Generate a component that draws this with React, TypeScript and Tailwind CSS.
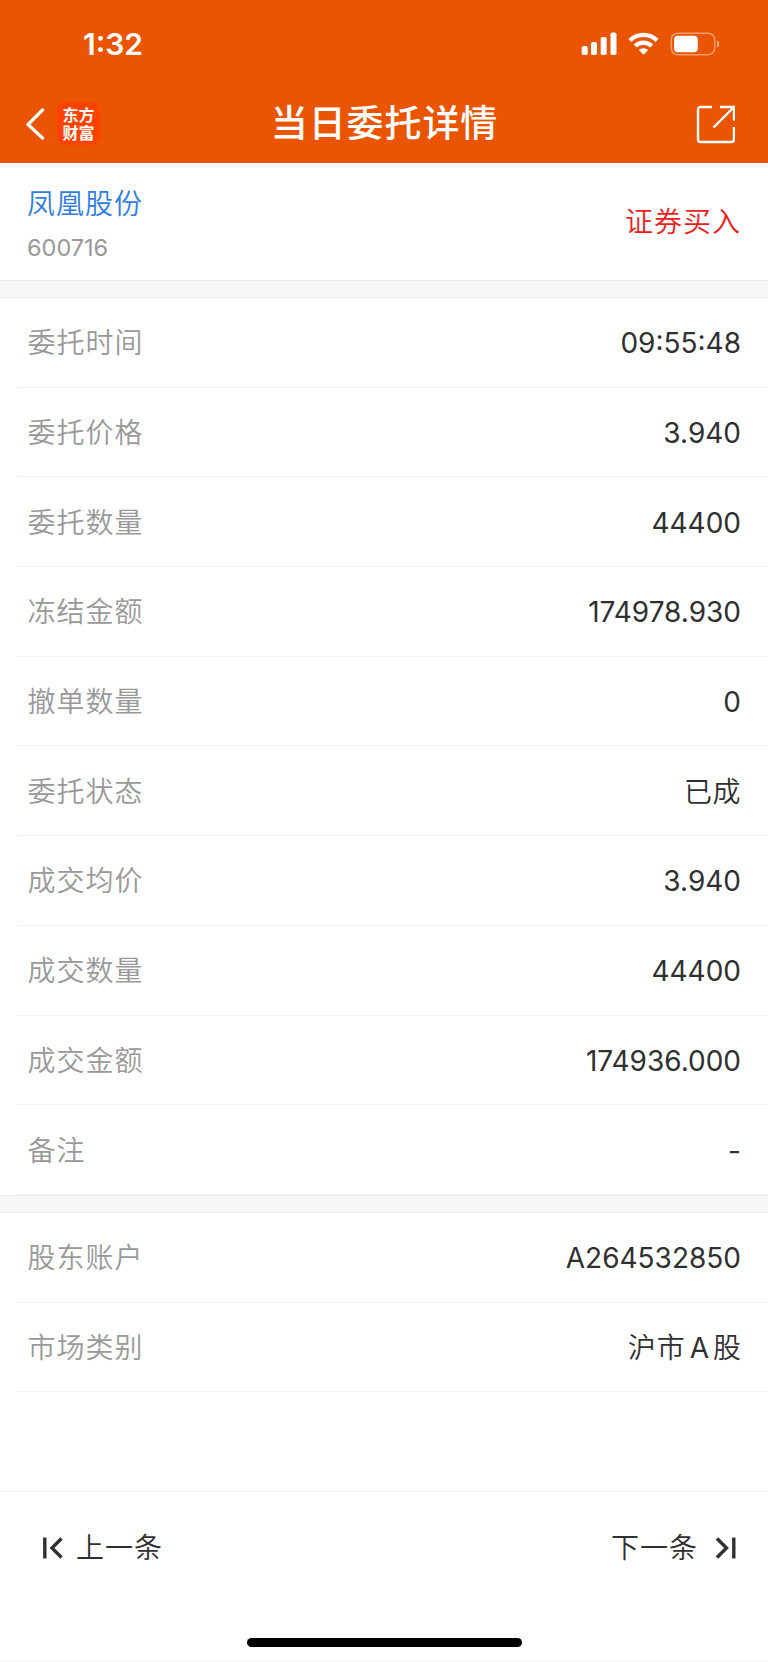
import type { ReactNode } from "react";

interface DetailItem {
    label: string;
    value: ReactNode;
}

const orderItems: DetailItem[] = [
    { label: "委托时间", value: "09:55:48" },
    { label: "委托价格", value: "3.940" },
    { label: "委托数量", value: "44400" },
    { label: "冻结金额", value: "174978.930" },
    { label: "撤单数量", value: "0" },
    { label: "委托状态", value: <span className="font-[350] tracking-[0.5px]">已成</span> },
    { label: "成交均价", value: "3.940" },
    { label: "成交数量", value: "44400" },
    { label: "成交金额", value: "174936.000" },
    { label: "备注", value: "-" }
];

const accountItems: DetailItem[] = [
    { label: "股东账户", value: "A264532850" },
    {
        label: "市场类别",
        value: (
            <>
                <span className="font-[350] tracking-[1px]">沪市</span>
                <span className="mx-[4px]">A</span>
                <span className="font-[350]">股</span>
            </>
        )
    }
];

function StatusBar() {
    return (
        <div className="flex h-[88px] items-center justify-between pl-[83px] pr-[48px] text-white">
            <span className="text-[30px] font-semibold leading-none">1:32</span>
            <div className="flex items-center">
                <svg width="36" height="24" viewBox="0 0 36 24" fill="currentColor">
                    <rect x="0.7" y="14" width="6" height="9" rx="1.8" />
                    <rect x="10" y="10" width="6" height="13" rx="1.8" />
                    <rect x="19.7" y="5" width="6" height="18" rx="1.8" />
                    <rect x="29.5" y="0.5" width="6" height="22.5" rx="1.8" />
                </svg>
                <svg className="ml-[11px]" width="31" height="24" viewBox="0 0 31 24" fill="none" stroke="currentColor" strokeWidth="4.2">
                    <path d="M1.9 8.4a19.4 19.4 0 0 1 27.2 0" />
                    <path d="M7.3 14.1a11.6 11.6 0 0 1 16.4 0" />
                    <path d="M10.8 18.1a6.7 6.7 0 0 1 9.4 0L15.5 22.8z" fill="currentColor" stroke="none" />
                </svg>
                <svg className="ml-[11px]" width="50" height="24" viewBox="0 0 50 24">
                    <rect x="1.2" y="1.2" width="43.5" height="21.5" rx="6.5" fill="none" stroke="white" strokeOpacity="0.42" strokeWidth="1.5" />
                    <rect x="4" y="3.8" width="23.8" height="16.4" rx="4" fill="white" />
                    <path d="M47 8.5c3 1 3 6 0 7z" fill="white" fillOpacity="0.5" />
                </svg>
            </div>
        </div>
    );
}

function Header() {
    return (
        <header className="h-[163px] bg-[#ea5504]">
            <StatusBar />
            <div className="grid h-[71px] grid-cols-[1fr_auto_1fr] items-center pl-[26px] pr-[33px] text-white">
                <div className="flex items-center">
                    <svg width="19" height="32" viewBox="0 0 19 32" fill="none" stroke="currentColor" strokeWidth="3.2" strokeLinecap="round" strokeLinejoin="round">
                        <path d="M16.5 2 2 16.500l14.500 13.500" />
                    </svg>
                    <div className="ml-3 flex h-[43px] w-[43px] flex-col items-center justify-center rounded-[9px] bg-[#ff4200] text-[16px] font-bold leading-[18px]">
                        <span>东方</span>
                        <span>财富</span>
                    </div>
                </div>
                <h1 className="ml-[8px] text-[37px] font-medium leading-[50px] tracking-[0.9px]">当日委托详情</h1>
                <svg className="justify-self-end" width="40" height="40" viewBox="0 0 40 40" fill="none" stroke="currentColor" strokeWidth="2.4">
                    <path d="M17 3H5.500A2.500 2.500 0 0 0 3 5.500v30A2.500 2.500 0 0 0 5.500 38h31a2.500 2.500 0 0 0 2.500-2.500V23" />
                    <path d="M25 3h14v13.500M38.500 3.500 18.500 23.500" />
                </svg>
            </div>
        </header>
    );
}

function DetailRow({ label, value }: DetailItem) {
    return (
        <div className="ml-[18px] flex h-[89.7px] items-center justify-between border-b border-[#f2f2f3] pl-[9.5px] pr-[27px] pt-[2px] text-[28px]">
            <span className="font-[350] tracking-[1px] text-[#999]">{label}</span>
            <span className="whitespace-nowrap text-[#303030]">{value}</span>
        </div>
    );
}

function Divider() {
    return <div className="h-[18px] border-y border-[#ededf0] bg-[#f6f7f9]" />;
}

export default function App() {
    return (
        <div className="flex h-[1662px] w-[768px] flex-col overflow-hidden bg-white font-['Inter','Noto_Sans_CJK_SC',sans-serif]">
            <Header />
            <section className="flex h-[117px] items-center justify-between px-[27px]">
                <div className="pt-[8px]">
                    <div className="text-[28px] font-[350] leading-[44px] tracking-[1px] text-[#2f7de1]">凤凰股份</div>
                    <div className="text-[23.5px] leading-[44px] text-[#999]">600716</div>
                </div>
                <div className="text-[28px] font-[350] tracking-[1px] text-[#f01c1c]">证券买入</div>
            </section>
            <Divider />
            <section>
                {orderItems.map((item) => (
                    <DetailRow key={item.label} label={item.label} value={item.value} />
                ))}
            </section>
            <Divider />
            <section>
                {accountItems.map((item) => (
                    <DetailRow key={item.label} label={item.label} value={item.value} />
                ))}
            </section>
            <footer className="mt-auto flex h-[171px] flex-col items-center border-t border-[#f3f3f3]">
                <div className="flex h-[111px] w-full items-center justify-between pl-[41px] pr-[32px] text-[28px] font-[350] tracking-[1px] text-[#303030]">
                    <button className="flex items-center gap-[13px]">
                        <svg width="22" height="24" viewBox="0 0 22 24" fill="none" stroke="currentColor" strokeWidth="3.4">
                            <path d="M3.800 1.500v21M20.500 2.500 11 12l9.500 9.500" />
                        </svg>
                        上一条
                    </button>
                    <button className="flex items-center gap-[16px]">
                        下一条
                        <svg width="22" height="24" viewBox="0 0 22 24" fill="none" stroke="currentColor" strokeWidth="3.4">
                            <path d="M19.800 1.500v21M3 2.500 12.500 12l-9.500 9.500" />
                        </svg>
                    </button>
                </div>
                <div className="mt-auto mb-[13px] h-[9px] w-[275px] rounded-full bg-black" />
                <div className="h-0.5 w-full bg-[#f8f8f8]" />
            </footer>
        </div>
    );
}
